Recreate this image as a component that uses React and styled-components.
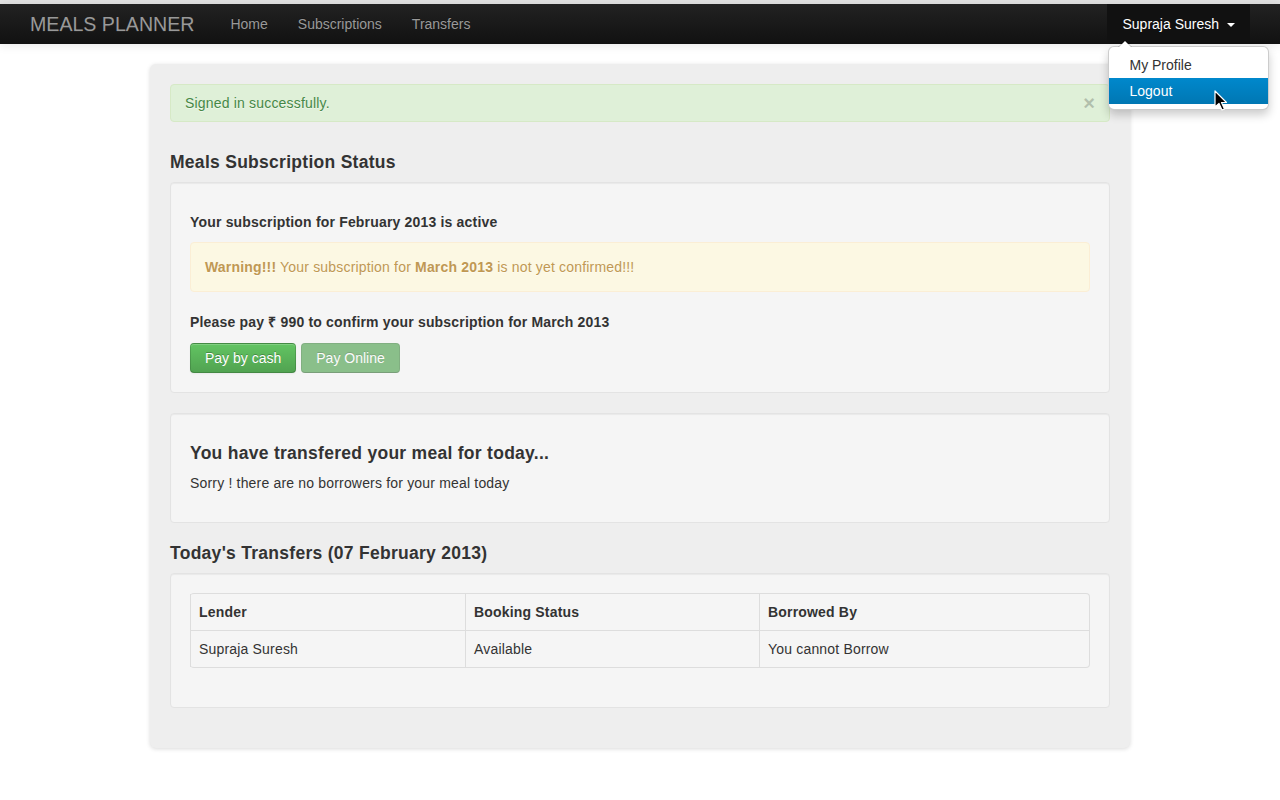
import React from "react";
import styled, { createGlobalStyle } from "styled-components";

const Global = createGlobalStyle`
  html, body { margin: 0; padding: 0; background: #fff; }
  body {
    font-family: "Liberation Sans", Arial, sans-serif;
    font-size: 14px;
    line-height: 20px;
    color: #333;
  }
  * { box-sizing: border-box; }
`;

const Page = styled.div`
  width: 1280px;
  min-height: 800px;
  border-top: 4px solid #e3e3e3;
  position: relative;
`;

const Navbar = styled.div`
  height: 40px;
  display: flex;
  align-items: center;
  padding: 0 30px 0 10px;
  background: linear-gradient(to bottom, #222, #111);
  box-shadow: 0 1px 10px rgba(0, 0, 0, 0.1);
`;

const Brand = styled.a`
  font-size: 19.6px;
  font-weight: 200;
  color: #999;
  padding: 10px 21px 10px 20px;
  line-height: 20px;
  text-shadow: 0 1px 0 #222;
`;

const NavLink = styled.a`
  color: #999;
  padding: 10px 15px;
  line-height: 20px;
  text-shadow: 0 -1px 0 rgba(0, 0, 0, 0.25);
`;

const Spacer = styled.div`
  flex: 1;
`;

const UserToggle = styled.div`
  position: relative;
  height: 40px;
  display: flex;
  align-items: center;
  gap: 8px;
  padding: 0 15px;
  background: #111;
  color: #fff;
`;

const Caret = styled.span`
  width: 0;
  height: 0;
  border-left: 4px solid transparent;
  border-right: 4px solid transparent;
  border-top: 4px solid #fff;
  margin-top: 1px;
`;

const Menu = styled.div`
  position: absolute;
  top: 42px;
  left: 1px;
  width: 161px;
  padding: 5px 0;
  background: #fff;
  border: 1px solid rgba(0, 0, 0, 0.2);
  border-radius: 6px;
  box-shadow: 0 5px 10px rgba(0, 0, 0, 0.2);
  z-index: 5;

  &::before {
    content: "";
    position: absolute;
    top: -7px;
    left: 9px;
    border-left: 7px solid transparent;
    border-right: 7px solid transparent;
    border-bottom: 7px solid rgba(0, 0, 0, 0.2);
  }
  &::after {
    content: "";
    position: absolute;
    top: -6px;
    left: 10px;
    border-left: 6px solid transparent;
    border-right: 6px solid transparent;
    border-bottom: 6px solid #fff;
  }
`;

const MenuItem = styled.a`
  display: block;
  padding: 3px 20px;
  line-height: 20px;
  color: ${(p) => (p.$active ? "#fff" : "#333")};
  background: ${(p) =>
    p.$active ? "linear-gradient(to bottom, #0088cc, #0077b3)" : "transparent"};
`;

const Cursor = styled.svg`
  position: absolute;
  left: 107px;
  top: 86px;
  z-index: 10;
`;

const Container = styled.div`
  width: 980px;
  margin: 20px 0 0 150px;
  padding: 20px;
  background: #eee;
  border-radius: 6px;
  box-shadow: 0 1px 4px rgba(0, 0, 0, 0.15);
  letter-spacing: 0.18px;
`;

const Alert = styled.div`
  position: relative;
  padding: ${(p) => (p.$block ? "14px 35px 14px 14px" : "8px 35px 8px 14px")};
  margin-bottom: ${(p) => p.$mb ?? 20}px;
  color: ${(p) => (p.$type === "success" ? "#468847" : "#c09853")};
  background: ${(p) => (p.$type === "success" ? "#dff0d8" : "#fcf8e3")};
  border: 1px solid ${(p) => (p.$type === "success" ? "#d6e9c6" : "#fbeed5")};
  border-radius: 4px;
  text-shadow: 0 1px 0 rgba(255, 255, 255, 0.5);
`;

const Close = styled.span`
  position: absolute;
  right: 14px;
  top: 8px;
  font-size: 20px;
  font-weight: bold;
  line-height: 20px;
  color: #000;
  opacity: 0.2;
`;

const Heading = styled.h4`
  font-size: 17.5px;
  line-height: 20px;
  font-weight: bold;
  letter-spacing: 0.28px;
  margin: ${(p) => p.$mt}px 0 ${(p) => p.$mb}px;
  color: #333;
`;

const Well = styled.div`
  padding: 19px;
  margin-bottom: 20px;
  background: #f5f5f5;
  border: 1px solid #e3e3e3;
  border-radius: 4px;
  box-shadow: inset 0 1px 1px rgba(0, 0, 0, 0.05);
`;

const Strong = styled.p`
  font-weight: bold;
  margin: ${(p) => p.$mt ?? 0}px 0 ${(p) => p.$mb ?? 10}px;
`;

const Text = styled.p`
  margin: 0 0 10px;
`;

const Buttons = styled.div`
  display: flex;
  gap: 5px;
`;

const Button = styled.button`
  font-family: inherit;
  font-size: 14px;
  line-height: 20px;
  letter-spacing: 0;
  padding: 4px 14px;
  color: #fff;
  text-shadow: 0 -1px 0 rgba(0, 0, 0, 0.25);
  border: 1px solid rgba(0, 0, 0, 0.15);
  border-bottom-color: rgba(0, 0, 0, 0.3);
  border-radius: 4px;
  opacity: ${(p) => (p.disabled ? 0.65 : 1)};
  background: ${(p) => (p.disabled ? "#51a351" : "linear-gradient(to bottom, #62c462, #51a351)")};
  box-shadow: ${(p) => (p.disabled ? "none" : "inset 0 1px 0 rgba(255,255,255,.2), 0 1px 2px rgba(0,0,0,.05)")};
`;

const Table = styled.table`
  width: 900px;
  margin-bottom: 20px;
  border-collapse: separate;
  border-spacing: 0;
  border: 1px solid #ddd;
  border-left: 0;
  border-radius: 4px;
`;

const Th = styled.th`
  text-align: left;
  font-weight: bold;
  padding: 8px;
  line-height: 20px;
  border-left: 1px solid #ddd;
  width: ${(p) => p.$w || "auto"};
`;

const Td = styled.td`
  padding: 8px;
  line-height: 20px;
  border-left: 1px solid #ddd;
  border-top: 1px solid #ddd;
`;

export default function App() {
  return (
    <Page>
      <Global />
      <Navbar>
        <Brand>MEALS PLANNER</Brand>
        <NavLink>Home</NavLink>
        <NavLink>Subscriptions</NavLink>
        <NavLink>Transfers</NavLink>
        <Spacer />
        <UserToggle>
          Supraja Suresh <Caret />
          <Menu>
            <MenuItem>My Profile</MenuItem>
            <MenuItem $active>Logout</MenuItem>
          </Menu>
          <Cursor width="14" height="22" viewBox="0 0 14 22">
            <path
              d="M1 1 L1 17 L5 13.5 L8 20 L10.5 19 L7.5 12.5 L12.5 12.5 Z"
              fill="#000"
              stroke="#fff"
              strokeWidth="1.2"
              strokeLinejoin="round"
            />
          </Cursor>
        </UserToggle>
      </Navbar>

      <Container>
        <Alert $type="success" $mb={20}>
          Signed in successfully.
          <Close>×</Close>
        </Alert>

        <Heading $mt={30} $mb={10}>Meals Subscription Status</Heading>
        <Well>
          <Strong $mt={10} $mb={10}>Your subscription for February 2013 is active</Strong>
          <Alert $type="warning" $block $mb={20}>
            <b>Warning!!!</b> Your subscription for <b>March 2013</b> is not yet confirmed!!!
          </Alert>
          <Strong $mb={11}>Please pay ₹ 990 to confirm your subscription for March 2013</Strong>
          <Buttons>
            <Button>Pay by cash</Button>
            <Button disabled>Pay Online</Button>
          </Buttons>
        </Well>

        <Well>
          <Heading $mt={10} $mb={10}>You have transfered your meal for today...</Heading>
          <Text>Sorry ! there are no borrowers for your meal today</Text>
        </Well>

        <Heading $mt={20} $mb={10}>Today's Transfers (07 February 2013)</Heading>
        <Well>
          <Table>
            <thead>
              <tr>
                <Th $w="275px">Lender</Th>
                <Th $w="294px">Booking Status</Th>
                <Th>Borrowed By</Th>
              </tr>
            </thead>
            <tbody>
              <tr>
                <Td>Supraja Suresh</Td>
                <Td>Available</Td>
                <Td>You cannot Borrow</Td>
              </tr>
            </tbody>
          </Table>
        </Well>
      </Container>
    </Page>
  );
}
